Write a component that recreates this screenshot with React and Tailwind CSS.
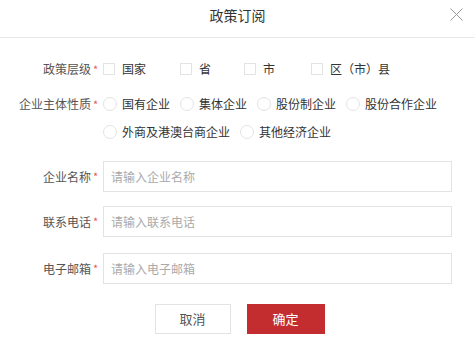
import React from 'react';

const font = { fontFamily: '"Noto Sans CJK SC", "Liberation Sans", sans-serif' };

function Label({ children }) {
    return (
        <div className="w-[103px] shrink-0 flex justify-end items-center pr-[4px] text-[12px] text-[#555]">
            <span>{children}</span>
            <span className="text-[#e05a5a] ml-[2px] text-[11px] w-[6px]">*</span>
        </div>
    );
}

function Check({ text, mr }) {
    return (
        <div className={`flex items-center ${mr}`}>
            <span className="w-[12px] h-[12px] border border-[#e3e3e3] bg-white"></span>
            <span className="ml-[7px] text-[12px] text-[#333]">{text}</span>
        </div>
    );
}

function Radio({ text }) {
    return (
        <div className="flex items-center mr-[10px]">
            <span className="w-[14px] h-[14px] rounded-full border border-[#e3e3e3] bg-white"></span>
            <span className="ml-[5px] text-[12px] text-[#333]">{text}</span>
        </div>
    );
}

function Field({ label, placeholder, className }) {
    return (
        <div className={`flex items-center ${className}`}>
            <Label>{label}</Label>
            <div className="w-[349px] h-[31px] border border-[#e3e3e3] flex items-center px-[7px] text-[12px] text-[#aaa]">
                {placeholder}
            </div>
        </div>
    );
}

export default function App() {
    return (
        <div className="w-[475px] h-[346px] bg-white relative" style={font}>
            {/* header */}
            <div className="h-[38px] border-b border-[#e8e8e8] flex items-center justify-center">
                <h1 className="text-[14px] text-[#333] -mt-[6px]">政策订阅</h1>
                <button className="absolute right-[12px] top-[8px] w-[13px] h-[13px]">
                    <svg viewBox="0 0 13 13" width="13" height="13">
                        <path d="M0.5 0.5 L12.5 12.5 M12.5 0.5 L0.5 12.5" stroke="#999" strokeWidth="1" fill="none" />
                    </svg>
                </button>
            </div>

            <div className="pt-[22px]">
                {/* 政策层级 */}
                <div className="flex items-center h-[18px]">
                    <Label>政策层级</Label>
                    <Check text="国家" mr="mr-[34px]" />
                    <Check text="省" mr="mr-[33px]" />
                    <Check text="市" mr="mr-[36px]" />
                    <Check text="区（市）县" mr="" />
                </div>

                {/* 企业主体性质 */}
                <div className="flex items-start mt-[17px]">
                    <Label>企业主体性质</Label>
                    <div className="flex flex-wrap w-[360px] gap-y-[10px]">
                        <Radio text="国有企业" />
                        <Radio text="集体企业" />
                        <Radio text="股份制企业" />
                        <Radio text="股份合作企业" />
                        <Radio text="外商及港澳台商企业" />
                        <Radio text="其他经济企业" />
                    </div>
                </div>

                <Field label="企业名称" placeholder="请输入企业名称" className="mt-[20px]" />
                <Field label="联系电话" placeholder="请输入联系电话" className="mt-[14px]" />
                <Field label="电子邮箱" placeholder="请输入电子邮箱" className="mt-[16px]" />

                <div className="flex justify-center gap-[16px] mt-[20px] pl-[4px]">
                    <button className="w-[76px] h-[30px] border border-[#e3e3e3] bg-white text-[13px] text-[#555]">取消</button>
                    <button className="w-[78px] h-[30px] bg-[#c42d30] text-[13px] text-white">确定</button>
                </div>
            </div>
        </div>
    );
}
